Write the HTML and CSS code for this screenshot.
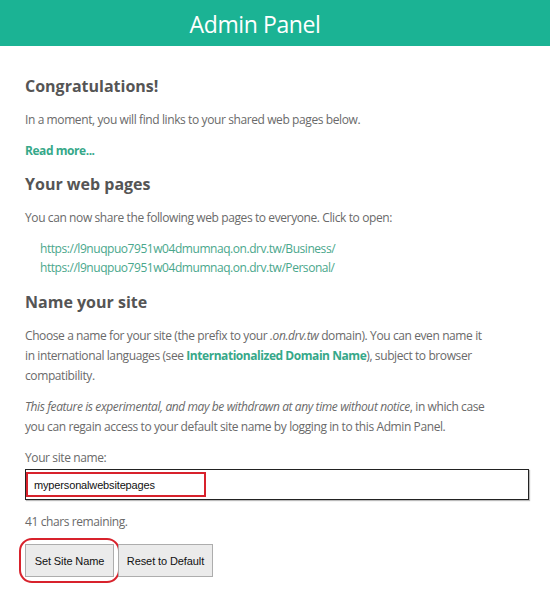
FILE: index.html
```html
<!DOCTYPE html>
<html lang="en">
<head>
<meta charset="utf-8">
<title>Admin Panel</title>
<link rel="stylesheet" href="styles.css">
</head>
<body>
<header class="topbar"><h1 class="title">Admin Panel</h1></header>
<main class="content">
  <h2 class="heading">Congratulations!</h2>
  <p class="text">In a moment, you will find links to your shared web pages below.</p>
  <p class="text"><a class="strong-link" href="#">Read more...</a></p>
  <h2 class="heading">Your web pages</h2>
  <p class="text">You can now share the following web pages to everyone. Click to open:</p>
  <ul class="links">
    <li><a class="page-link" href="#">https://l9nuqpuo7951w04dmumnaq.on.drv.tw/Business/</a></li>
    <li><a class="page-link" href="#">https://l9nuqpuo7951w04dmumnaq.on.drv.tw/Personal/</a></li>
  </ul>
  <h2 class="heading">Name your site</h2>
  <p class="text">Choose a name for your site (the prefix to your <em>.on.drv.tw</em> domain). You can even name it in international languages (see <a class="strong-link" href="#">Internationalized Domain Name</a>), subject to browser compatibility.</p>
  <p class="text"><em>This feature is experimental, and may be withdrawn at any time without notice</em>, in which case you can regain access to your default site name by logging in to this Admin Panel.</p>
  <label class="label" for="site">Your site name:</label>
  <div class="field">
    <input class="input" id="site" type="text" value="mypersonalwebsitepages">
    <span class="mark mark-input"></span>
  </div>
  <p class="text remaining">41 chars remaining.</p>
  <div class="actions">
    <div class="btn-wrap">
      <button class="btn" type="button">Set Site Name</button>
    </div>
    <button class="btn btn-wide" type="button">Reset to Default</button>
  </div>
</main>
</body>
</html>
```
FILE: styles.css
```css
html, body { margin: 0; padding: 0; background: #fff; }
body {
  font-family: "Open Sans", "Noto Sans", sans-serif;
  color: #6a6a6a;
  font-size: 12px;
}
.topbar {
  background: #1bb394;
  height: 46px;
  display: flex;
  align-items: center;
  justify-content: center;
  padding-right: 40px;
}
.title {
  margin: 0;
  padding-top: 3px;
  color: #fff;
  font-weight: 400;
  font-size: 23px;
  letter-spacing: -0.4px;
  line-height: 43px;
}
.content {
  padding: 28px 21px 14px 25px;
}
.heading {
  margin: 0 0 12px;
  font-size: 16px;
  font-weight: 700;
  line-height: 24px;
  color: #555;
}
.text {
  margin: 0 0 11px;
  max-width: 462px;
  line-height: 20px;
  letter-spacing: -0.4px;
}
.strong-link {
  color: #36a889;
  font-weight: 700;
  text-decoration: none;
  letter-spacing: -0.45px;
}
.links {
  list-style: none;
  margin: 0 0 13px;
  padding: 0 0 0 15px;
  line-height: 19px;
  letter-spacing: -0.45px;
}
.page-link {
  color: #4aa78c;
  text-decoration: none;
}
.label {
  display: block;
  line-height: 20px;
  margin-bottom: 1px;
  letter-spacing: -0.4px;
}
.field {
  position: relative;
  margin-bottom: 12px;
}
.input {
  display: block;
  box-sizing: border-box;
  width: 504px;
  height: 31px;
  border: 1px solid #222;
  box-shadow: 1px 1px 1px #bbb;
  padding: 0 8px;
  font-family: "Liberation Sans", Arial, sans-serif;
  font-size: 11px;
  letter-spacing: -0.15px;
  color: #111;
  outline: none;
}
.mark {
  position: absolute;
  z-index: 2;
  border: 2px solid #d8222c;
  pointer-events: none;
}
.mark-input {
  left: 1px;
  top: 3px;
  width: 176px;
  height: 21px;
}
.remaining { margin-bottom: 12px; }
.actions {
  display: flex;
  gap: 4px;
}
.btn-wrap {
  outline: 2px solid #d8222c;
  outline-offset: 4px;
  border-radius: 7px;
}
.btn {
  display: block;
  box-sizing: border-box;
  height: 33px;
  width: 89px;
  background: #ebebeb;
  border: 1px solid #adadad;
  font-family: "Liberation Sans", Arial, sans-serif;
  font-size: 11px;
  letter-spacing: -0.1px;
  color: #111;
  padding: 0;
}
.btn-wide { width: 95px; }
```
